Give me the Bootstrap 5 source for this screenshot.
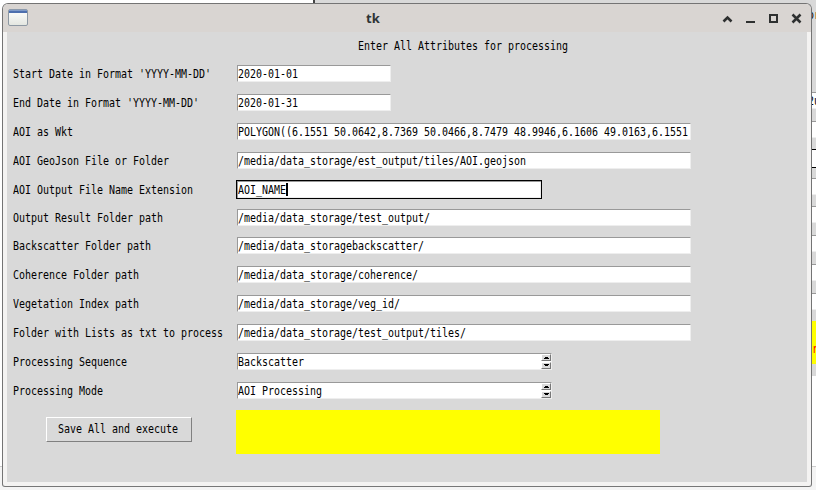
<!DOCTYPE html>
<html lang="en">
<head>
<meta charset="utf-8">
<title>tk</title>
<link href="https://cdn.jsdelivr.net/npm/bootstrap@5.3.0/dist/css/bootstrap.min.css" rel="stylesheet">
<style>
body{width:816px;height:490px;background:#fff;color:#000;font:12px/17px "DejaVu Sans Mono",monospace}
.desk-top{left:313px;right:0;top:0;height:30px;background:#d9d9d9;border-left:2px solid #444}
.desk-side{left:811px;right:0;top:0;height:376px;background:#d9d9d9}
.desk-foot{left:0;right:0;top:466px;bottom:0;background:#f4f4f4;border-top:1px solid #ccc}
.peek{height:17px;background:#fff;border-top:1px solid #999;border-bottom:1px solid #eee}
.peek-focus{height:19px;background:#fff;border:solid #000;border-width:1px 0}
.win{left:2px;top:3px;width:810px;height:484px;border:1px solid #747474;border-bottom-color:#777;border-radius:6px 6px 3px 3px;background:#f4f3f2;overflow:hidden}
.titlebar{height:28px;background:#d9d5d2;color:#2e3436;font:bold 13px/28px "Noto Sans",sans-serif}
.client{width:800px;height:450px;margin-left:4px;background:#d9d9d9}
.tx{display:inline-block;white-space:pre;transform:scaleX(.8306);transform-origin:0 50%}
.heading{height:27px;padding:6px 0 0 351px}
.line{height:29px;padding-left:6px}
.line-short{height:27px}
.lab{width:224px;height:17px;padding-top:1px}
.entry{height:17px;line-height:17px;width:454px;background:#fff;border:1px solid;border-color:#999 #eee #eee #999;padding-left:0;overflow:hidden}
.w-date{width:154px}
.w-spin{width:315px}
.entry-focus{width:306px;height:19px;border:1px solid #000;margin-left:-1px;background:#fff;box-shadow:inset 1px 1px #999,inset -1px -1px #eee;padding-left:1px;line-height:19px}
.caret{left:49px;top:2px;width:2px;height:13px;background:#000}
.spin{width:10px}
.spin span{display:block;width:10px;height:7px;background:#d9d9d9;border:1px solid;border-color:#fff #777 #777 #fff;line-height:0}
.spin svg,.titlebar svg{display:block}
.save{width:146px;height:25px;margin:7px 44px 0 39px;border:1px solid;border-color:#fff #808080 #808080 #fff;background:#d9d9d9;padding:0 0 2px 11px;color:#000;text-align:left;line-height:20px}
.status{width:424px;height:44px;background:#ff0}
</style>
<script src="https://cdn.jsdelivr.net/npm/bootstrap@5.3.0/dist/js/bootstrap.bundle.min.js"></script>
</head>
<body class="position-relative overflow-hidden">
<!-- windows behind the dialog -->
<div class="position-absolute desk-top"></div>
<div class="position-absolute desk-foot"></div>
<div class="position-absolute desk-side overflow-hidden">
  <div class="position-absolute w-100" style="top:7px"><span class="tx" style="margin-left:-3px">or</span></div>
  <div class="position-absolute w-100 peek" style="top:92px;line-height:17px"><span class="tx" style="margin-left:-3px">2u</span></div>
  <div class="position-absolute w-100 peek" style="top:121px"></div>
  <div class="position-absolute w-100 peek-focus" style="top:149px"></div>
  <div class="position-absolute w-100 peek" style="top:178px"></div>
  <div class="position-absolute w-100 peek" style="top:206px"></div>
  <div class="position-absolute w-100 peek" style="top:235px"></div>
  <div class="position-absolute w-100 peek" style="top:264px"></div>
  <div class="position-absolute w-100 peek" style="top:293px"></div>
  <div class="position-absolute w-100" style="top:321px;height:43px;background:#ff0;color:red;padding:20px 0 0 1px"><span class="tx">r</span></div>
</div>

<div class="position-absolute win">
  <div class="titlebar d-flex align-items-center position-relative">
    <svg class="ms-1" width="22" height="20" viewBox="0 0 22 20"><defs><linearGradient id="g" x2="0" y2="1"><stop stop-color="#fff"/><stop offset="1" stop-color="#e3e6e0"/></linearGradient></defs><rect x="1.5" y="1.5" width="19" height="16" rx="1.5" fill="url(#g)" stroke="#8d98a3"/><path d="M2 3.5h18" stroke="#4d6fae" stroke-width="3"/><path d="M2 2.3h18" stroke="#8ba5cf"/></svg>
    <span style="margin-left:337px">tk</span>
    <svg class="ms-auto" style="margin-right:8px" width="82" height="14" viewBox="0 0 82 14" fill="none" stroke="#2e3030"><path d="M2.5 10.5 6.5 6.5 10.5 10.5" stroke-width="2.6"/><path d="M25 11h9" stroke-width="2"/><rect x="49" y="4" width="7" height="7" stroke-width="2"/><path d="M71.5 3.5l8 8m0-8l-8 8" stroke-width="2.5"/></svg>
  </div>
  <div class="client">
    <div class="heading"><span class="tx">Enter All Attributes for processing</span></div>
    <div class="line d-flex align-items-center"><div class="lab"><span class="tx">Start Date in Format 'YYYY-MM-DD'</span></div><div class="entry w-date"><span class="tx">2020-01-01</span></div></div>
    <div class="line d-flex align-items-center"><div class="lab"><span class="tx">End Date in Format 'YYYY-MM-DD'</span></div><div class="entry w-date"><span class="tx">2020-01-31</span></div></div>
    <div class="line d-flex align-items-center"><div class="lab"><span class="tx">AOI as Wkt</span></div><div class="entry"><span class="tx">POLYGON((6.1551 50.0642,8.7369 50.0466,8.7479 48.9946,6.1606 49.0163,6.1551</span></div></div>
    <div class="line d-flex align-items-center"><div class="lab"><span class="tx">AOI GeoJson File or Folder</span></div><div class="entry"><span class="tx">/media/data_storage/est_output/tiles/AOI.geojson</span></div></div>
    <div class="line d-flex align-items-center"><div class="lab"><span class="tx">AOI Output File Name Extension</span></div><div class="entry-focus position-relative"><span class="tx">AOI_NAME</span><i class="caret position-absolute"></i></div></div>
    <div class="line line-short d-flex align-items-center"><div class="lab"><span class="tx">Output Result Folder path</span></div><div class="entry"><span class="tx">/media/data_storage/test_output/</span></div></div>
    <div class="line d-flex align-items-center"><div class="lab"><span class="tx">Backscatter Folder path</span></div><div class="entry"><span class="tx">/media/data_storagebackscatter/</span></div></div>
    <div class="line d-flex align-items-center"><div class="lab"><span class="tx">Coherence Folder path</span></div><div class="entry"><span class="tx">/media/data_storage/coherence/</span></div></div>
    <div class="line d-flex align-items-center"><div class="lab"><span class="tx">Vegetation Index path</span></div><div class="entry"><span class="tx">/media/data_storage/veg_id/</span></div></div>
    <div class="line d-flex align-items-center"><div class="lab"><span class="tx">Folder with Lists as txt to process</span></div><div class="entry"><span class="tx">/media/data_storage/test_output/tiles/</span></div></div>
    <div class="line d-flex align-items-center"><div class="lab"><span class="tx">Processing Sequence</span></div><div class="entry w-spin d-flex justify-content-between"><span class="tx">Backscatter</span><div class="spin"><span><svg width="8" height="5"><path d="M2 4V3h1V2h3v1h1v1z"/></svg></span><span style="margin-top:1px"><svg width="8" height="5"><path d="M2 1v1h1v1h3V2h1V1z"/></svg></span></div></div></div>
    <div class="line d-flex align-items-center"><div class="lab"><span class="tx">Processing Mode</span></div><div class="entry w-spin d-flex justify-content-between"><span class="tx">AOI Processing</span><div class="spin"><span><svg width="8" height="5"><path d="M2 4V3h1V2h3v1h1v1z"/></svg></span><span style="margin-top:1px"><svg width="8" height="5"><path d="M2 1v1h1v1h3V2h1V1z"/></svg></span></div></div></div>
    <div class="d-flex" style="padding-top:5px"><button class="save" type="button"><span class="tx">Save All and execute</span></button><div class="status"></div></div>
  </div>
</div>
</body>
</html>
